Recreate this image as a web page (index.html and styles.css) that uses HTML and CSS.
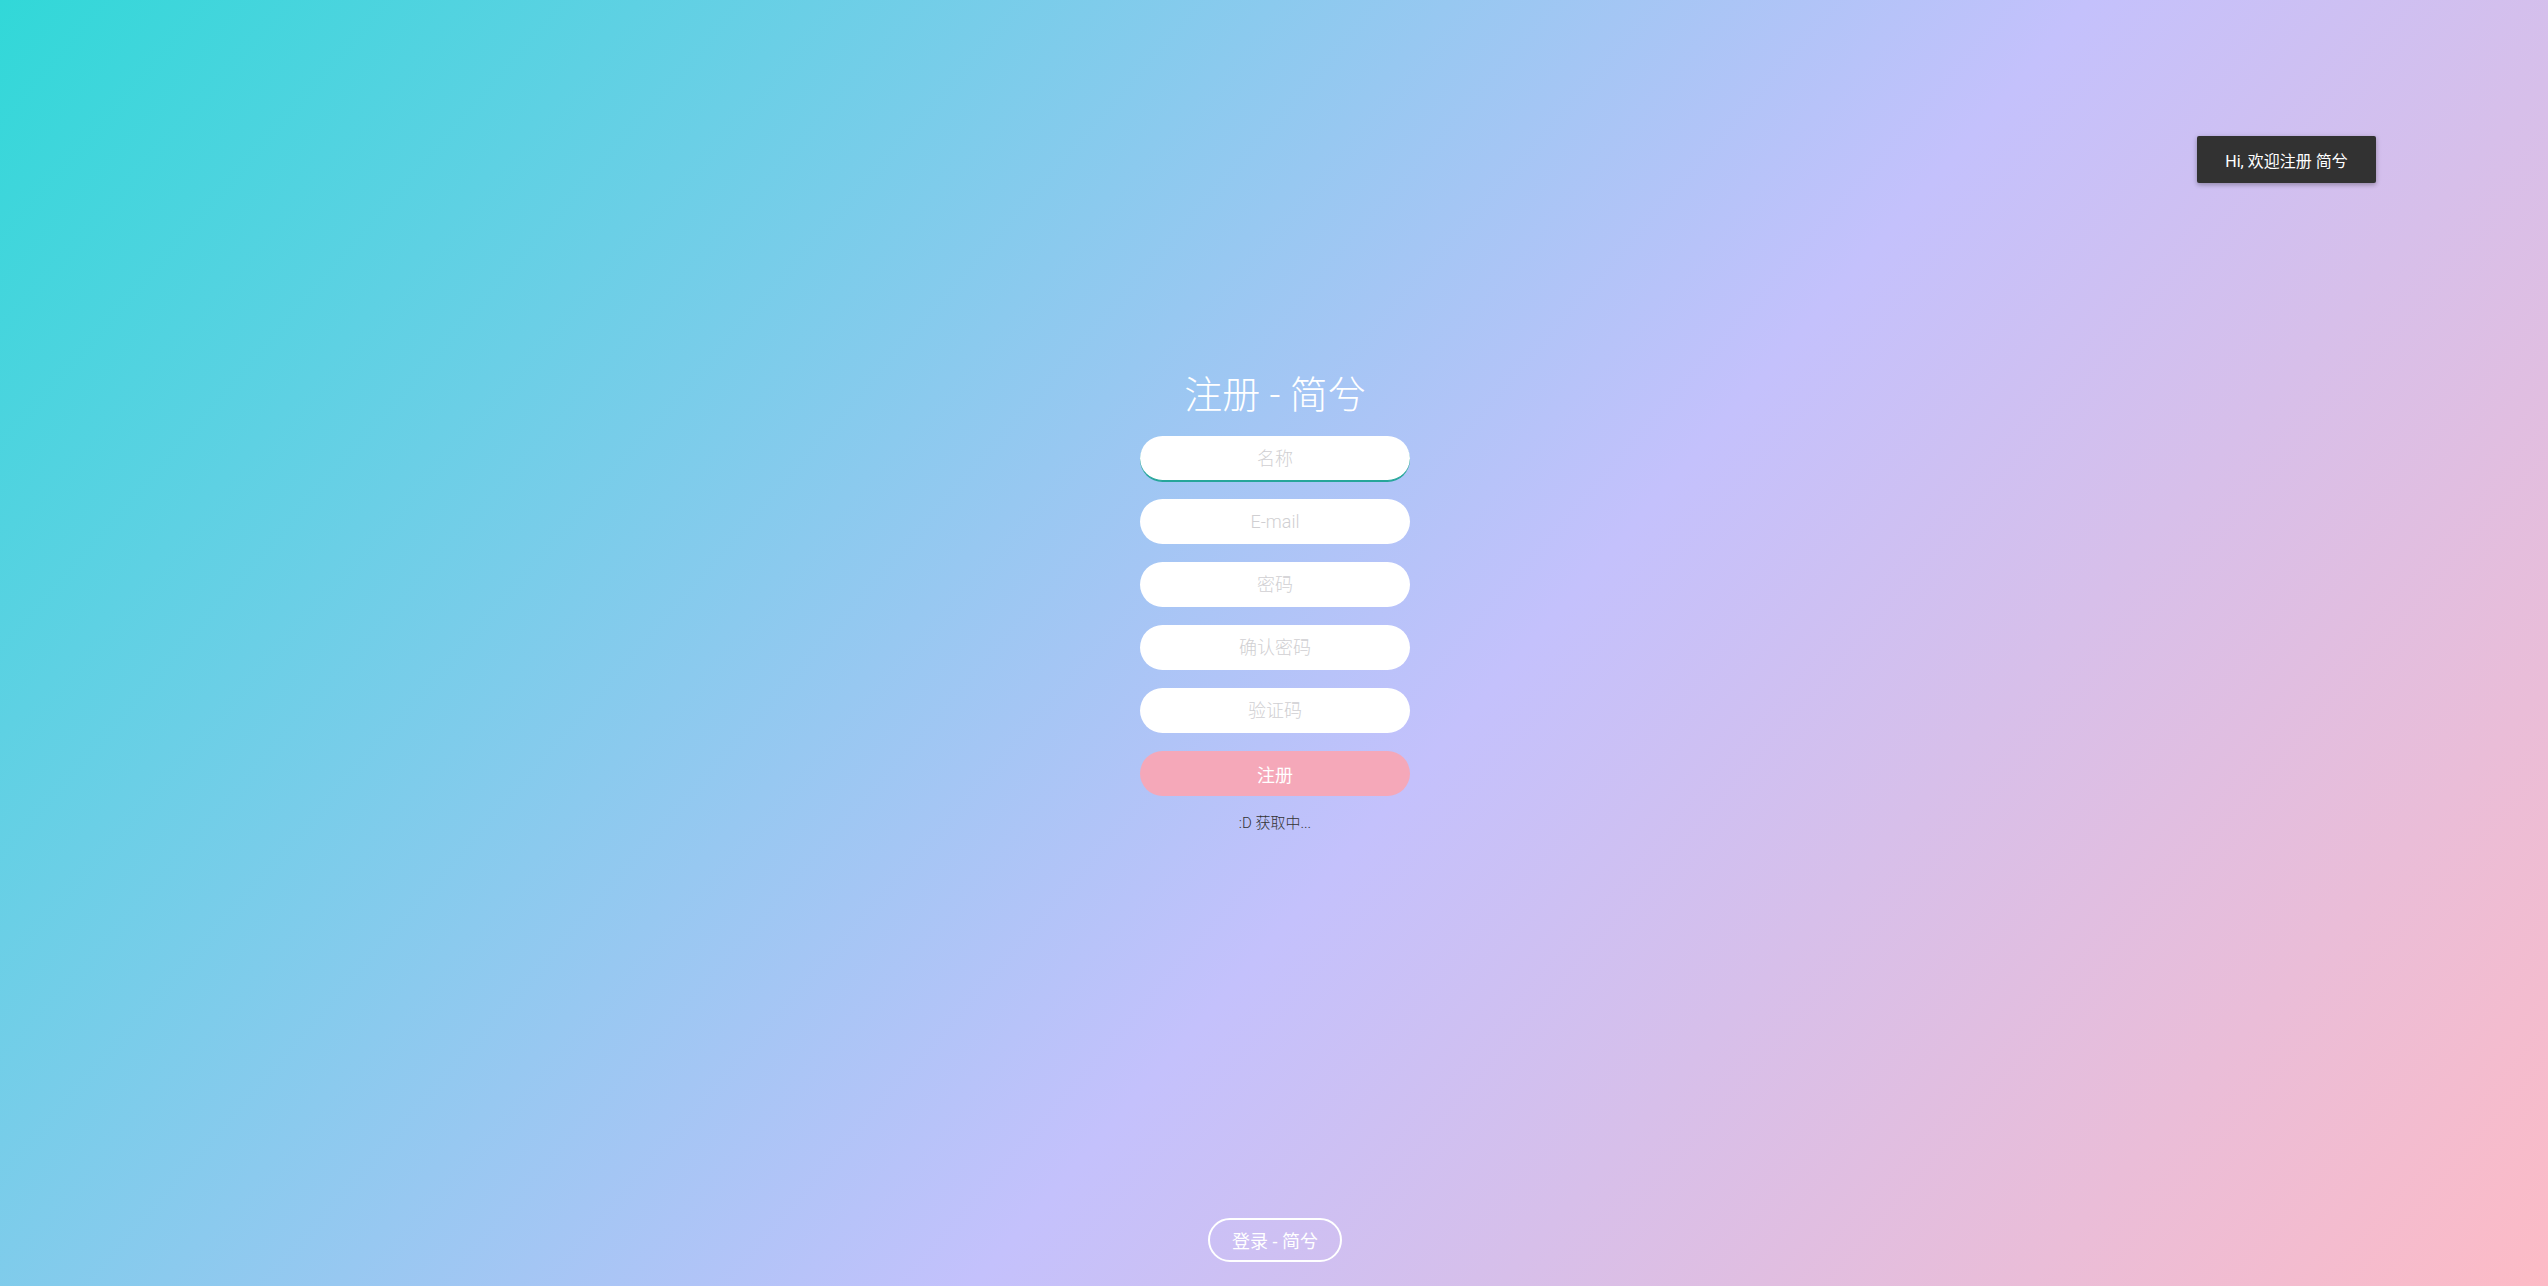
FILE: index.html
```html
<!DOCTYPE html>
<html lang="zh-CN">
<head>
<meta charset="utf-8">
<title>注册 - 简兮</title>
<link rel="stylesheet" href="styles.css">
</head>
<body>
<div class="page">
  <main class="form">
    <h1 class="title">注册 - 简兮</h1>
    <input class="field field-focus" type="text" placeholder="名称">
    <input class="field" type="text" placeholder="E-mail">
    <input class="field" type="password" placeholder="密码">
    <input class="field" type="password" placeholder="确认密码">
    <input class="field" type="text" placeholder="验证码">
    <button class="submit" type="button">注册</button>
    <p class="status">:D 获取中...</p>
  </main>
  <div class="spacer"></div>
  <a class="login" href="#">登录 - 简兮</a>
</div>
<div class="toast">Hi, 欢迎注册 简兮</div>
</body>
</html>
```
FILE: styles.css
```css
* { box-sizing: border-box; }
html, body { margin: 0; height: 100%; }
body {
  font-family: Roboto, "Noto Sans CJK SC", sans-serif;
  background: linear-gradient(131deg, #31d8d8 0%, #c4c1fc 57%, #fdbbc6 100%);
  overflow: hidden;
}
.page {
  height: 100vh;
  display: flex;
  flex-direction: column;
  align-items: center;
  padding-left: 2px;
}
.form {
  padding-top: 372px;
  display: flex;
  flex-direction: column;
  align-items: center;
  gap: 18px;
  width: 270px;
}
.title {
  margin: 0;
  height: 46px;
  line-height: 46px;
  font-size: 38px;
  font-weight: 300;
  color: #fff;
  white-space: nowrap;
}
.field {
  width: 270px;
  height: 45px;
  border: none;
  border-radius: 23px;
  background: #fff;
  outline: none;
  text-align: center;
  font-family: Roboto, "Noto Sans CJK SC", sans-serif;
  font-size: 18px;
  font-weight: 300;
  color: #333;
  padding: 0 20px;
}
.field::placeholder { color: #d0cfd2; }
.field-focus {
  border-bottom: 1px solid #26a69a;
  box-shadow: 0 1px 0 0 #26a69a;
}
.submit {
  width: 270px;
  height: 45px;
  border: none;
  border-radius: 23px;
  background: #f5a8b9;
  color: #fff;
  font-family: Roboto, "Noto Sans CJK SC", sans-serif;
  font-size: 18px;
  font-weight: 400;
}
.status {
  margin: -1px 0 0;
  height: 20px;
  line-height: 20px;
  font-size: 15px;
  font-weight: 300;
  color: #333;
}
.spacer { flex: 1; }
.login {
  margin-bottom: 24px;
  width: 134px;
  height: 44px;
  border: 2px solid #fff;
  border-radius: 22px;
  display: flex;
  align-items: center;
  justify-content: center;
  color: #fff;
  font-size: 18px;
  font-weight: 400;
  text-decoration: none;
  white-space: nowrap;
}
.toast {
  position: absolute;
  top: 136px;
  right: 172px;
  width: 179px;
  height: 47px;
  display: flex;
  align-items: center;
  justify-content: center;
  background: #323232;
  color: #fff;
  border-radius: 2px;
  font-size: 16px;
  font-weight: 400;
  white-space: nowrap;
  box-shadow: 0 2px 4px rgba(0,0,0,0.2), 0 1px 6px rgba(0,0,0,0.12);
}
```
